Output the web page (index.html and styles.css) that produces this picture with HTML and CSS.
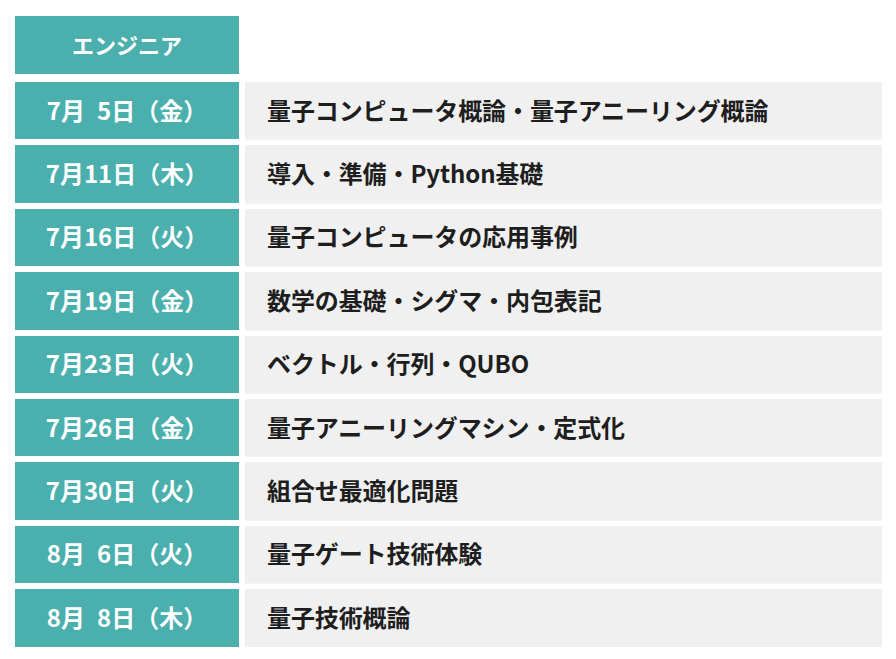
FILE: index.html
```html
<!DOCTYPE html>
<html lang="ja">
<head>
<meta charset="utf-8">
<link rel="stylesheet" href="styles.css">
</head>
<body>
<div class="schedule">
  <div class="head">エンジニア</div>
  <div class="grid">
    <div class="date">7月<span class="sp"></span>5日（金）</div>
    <div class="topic">量子コンピュータ概論・量子アニーリング概論</div>
    <div class="date">7月11日（木）</div>
    <div class="topic">導入・準備・Python基礎</div>
    <div class="date">7月16日（火）</div>
    <div class="topic">量子コンピュータの応用事例</div>
    <div class="date">7月19日（金）</div>
    <div class="topic">数学の基礎・シグマ・内包表記</div>
    <div class="date">7月23日（火）</div>
    <div class="topic">ベクトル・行列・QUBO</div>
    <div class="date">7月26日（金）</div>
    <div class="topic">量子アニーリングマシン・定式化</div>
    <div class="date">7月30日（火）</div>
    <div class="topic">組合せ最適化問題</div>
    <div class="date">8月<span class="sp"></span>6日（火）</div>
    <div class="topic">量子ゲート技術体験</div>
    <div class="date">8月<span class="sp"></span>8日（木）</div>
    <div class="topic">量子技術概論</div>
  </div>
</div>
</body>
</html>
```

FILE: styles.css
```css
html, body {
  margin: 0;
  padding: 0;
  background: #ffffff;
}
body {
  font-family: "Noto Sans CJK JP", "Noto Sans", sans-serif;
  font-weight: 700;
}
.schedule {
  padding: 16px 14px 0 15px;
}
.head {
  width: 224px;
  height: 58px;
  box-sizing: border-box;
  padding-bottom: 3px;
  background: #4aafad;
  color: #ffffff;
  font-size: 22px;
  display: flex;
  align-items: center;
  justify-content: center;
  margin-bottom: 8px;
}
.grid {
  display: grid;
  grid-template-columns: 224px 637px;
  grid-auto-rows: 57.4px;
  column-gap: 6px;
  row-gap: 6px;
}
.date {
  background: #4aafad;
  color: #ffffff;
  font-size: 24px;
  display: flex;
  align-items: center;
  justify-content: center;
  white-space: nowrap;
  padding-bottom: 3px;
}
.sp {
  display: inline-block;
  width: 0.5em;
}
.topic {
  background: #f0f0f0;
  color: #1e1e1e;
  font-size: 24px;
  display: flex;
  align-items: center;
  padding-left: 22px;
  padding-bottom: 3px;
  white-space: nowrap;
  letter-spacing: -0.1px;
  box-shadow: 0 1px 1px rgba(0, 0, 0, 0.04);
}
```
